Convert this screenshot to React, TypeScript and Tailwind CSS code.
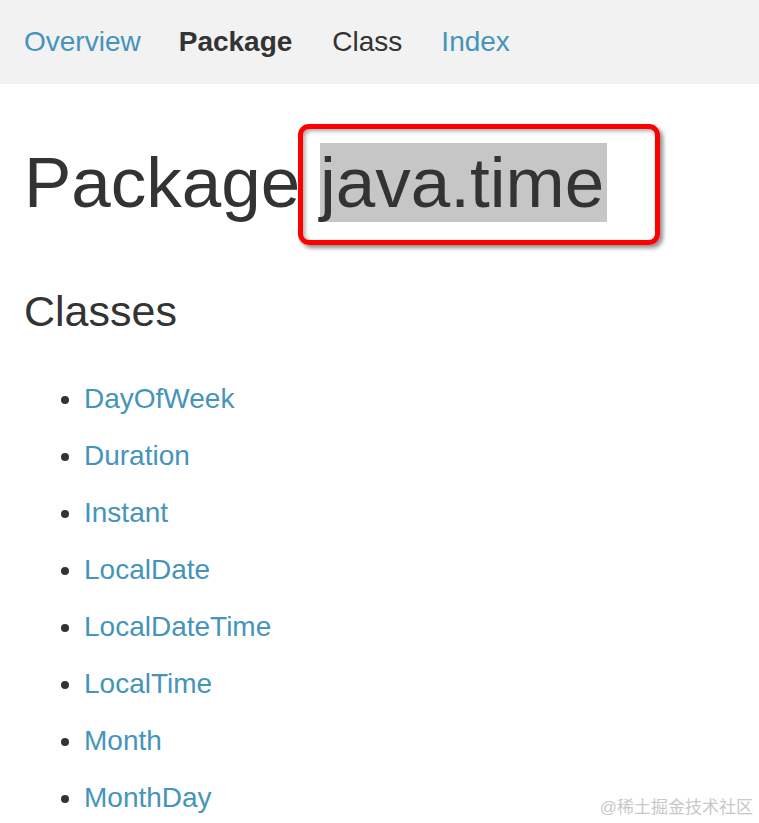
import React from "react";

const classes = [
  "DayOfWeek",
  "Duration",
  "Instant",
  "LocalDate",
  "LocalDateTime",
  "LocalTime",
  "Month",
  "MonthDay",
];

export default function App() {
  return (
    <div
      className="relative w-[759px] h-[823px] overflow-hidden bg-white text-[#333333]"
      style={{ fontFamily: '"Liberation Sans", Arial, sans-serif' }}
    >
      <nav className="flex items-center h-[84px] bg-[#f2f2f2] pl-[24px] text-[28px] leading-none">
        <a className="text-[#4594bb] mr-[38px]">Overview</a>
        <span className="font-bold text-[#333333] mr-[40px]">Package</span>
        <span className="text-[#333333] mr-[39px]">Class</span>
        <a className="text-[#4594bb]">Index</a>
      </nav>

      <h1 className="mt-[57px] pl-[24px] text-[71px] leading-[84px] font-normal whitespace-nowrap">
        Package <span className="bg-[#c6c6c6] pr-[3px]">java.time</span>
      </h1>

      <h2 className="mt-[61px] pl-[24px] text-[43px] leading-[50px] font-normal">
        Classes
      </h2>

      <ul className="mt-[43px] pl-[84px] list-disc marker:text-[#333333] text-[28px]">
        {classes.map((c) => (
          <li key={c} className="h-[57px] leading-[40px]">
            <a className="text-[#4594bb]">{c}</a>
          </li>
        ))}
      </ul>

      <div className="absolute left-[298px] top-[124px] w-[362px] h-[121px] rounded-[11px] border-[5px] border-[#ff0000] shadow-[3px_3px_4px_rgba(0,0,0,0.45),inset_2px_2px_4px_rgba(0,0,0,0.35)]" />

      <div
        className="absolute right-[6px] bottom-[7px] text-[17px] text-[#c8c8c8] leading-none"
        style={{ fontFamily: '"Liberation Sans", "Noto Sans CJK SC", sans-serif' }}
      >
        @稀土掘金技术社区
      </div>
    </div>
  );
}
